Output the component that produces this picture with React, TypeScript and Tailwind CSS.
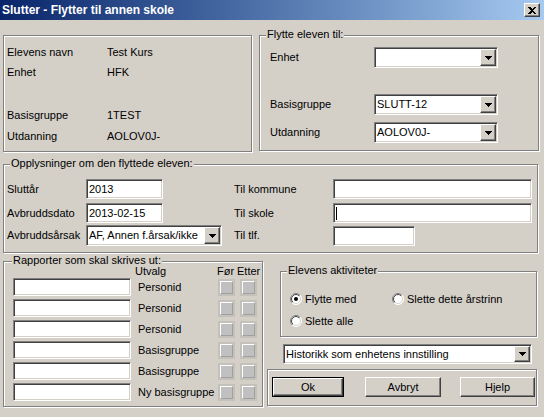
import React from "react";

const sunken =
  "bg-white border border-t-[#808080] border-l-[#808080] border-r-white border-b-white shadow-[inset_1px_1px_0_#404040,inset_-1px_-1px_0_#d4d0c8]";
const raised =
  "bg-[#d4d0c8] border border-t-white border-l-white border-r-[#404040] border-b-[#404040] shadow-[inset_-1px_-1px_0_#808080]";
const etched = "border border-[#808080] shadow-[inset_1px_1px_0_#fff,1px_1px_0_#fff]";

const Arrow = () => (
  <svg width="7" height="4" viewBox="0 0 7 4" shapeRendering="crispEdges">
    <rect x="0" y="0" width="7" height="1" fill="#000" />
    <rect x="1" y="1" width="5" height="1" fill="#000" />
    <rect x="2" y="2" width="3" height="1" fill="#000" />
    <rect x="3" y="3" width="1" height="1" fill="#000" />
  </svg>
);

const Combo = ({ value, className }: { value?: string; className: string }) => (
  <div className={`${sunken} ${className} flex p-px`}>
    <div className="flex-1 pl-px flex items-center overflow-hidden whitespace-nowrap">{value}</div>
    <div className={`${raised} w-[16px] flex items-center justify-center`}>
      <Arrow />
    </div>
  </div>
);

const Input = ({ value, className, caret }: { value?: string; className: string; caret?: boolean }) => (
  <div className={`${sunken} ${className} flex items-center px-[2px] whitespace-nowrap`}>
    {value}
    {caret && <span className="w-px h-[13px] bg-black" />}
  </div>
);

const Group = ({
  label,
  labelLeft = "left-[6px]",
  className,
  children,
}: {
  label?: string;
  labelLeft?: string;
  className: string;
  children: React.ReactNode;
}) => (
  <div className={`relative ${etched} ${className}`}>
    {label && (
      <span className={`absolute -top-[7px] ${labelLeft} bg-[#d4d0c8] px-px leading-[11px]`}>{label}</span>
    )}
    {children}
  </div>
);

const Radio = ({ checked }: { checked?: boolean }) => (
  <svg width="12" height="12" viewBox="0 0 12 12">
    <defs>
      <linearGradient id="ro" x1="0" y1="0" x2="1" y2="1">
        <stop offset="0.5" stopColor="#808080" />
        <stop offset="0.5" stopColor="#ffffff" />
      </linearGradient>
      <linearGradient id="ri" x1="0" y1="0" x2="1" y2="1">
        <stop offset="0.5" stopColor="#404040" />
        <stop offset="0.5" stopColor="#d4d0c8" />
      </linearGradient>
    </defs>
    <circle cx="6" cy="6" r="5.5" fill="#fff" stroke="url(#ro)" />
    <circle cx="6" cy="6" r="4.5" fill="#fff" stroke="url(#ri)" />
    {checked && <circle cx="6" cy="6" r="2" fill="#000" />}
  </svg>
);

const Check = () => (
  <div className="w-[17px] h-[17px] bg-[#c4c1ba] pt-[2px] pl-[2px]">
    <div className="w-[13px] h-[13px] bg-[#c0c0c0] border-t border-l border-t-white border-l-white border-r border-b border-r-[#a0a0a0] border-b-[#a0a0a0]" />
  </div>
);

const reports = ["Personid", "Personid", "Personid", "Basisgruppe", "Basisgruppe", "Ny basisgruppe"];

export default function App() {
  return (
    <div className="w-[544px] h-[417px] overflow-hidden bg-[#d4d0c8] text-black text-[11px] font-['Liberation_Sans',Arial,sans-serif] flex flex-col">
      {/* Title bar */}
      <div className="h-[20px] flex items-center pl-[2px] pr-[4px] bg-gradient-to-r from-[#0a246a] to-[#a6caf0]">
        <span className="text-white font-bold text-[12px] flex-1">Slutter - Flytter til annen skole</span>
        <div className={`${raised} w-[16px] h-[14px] flex items-center justify-center`}>
          <svg width="8" height="7" viewBox="0 0 8 7" shapeRendering="crispEdges">
            <path d="M0 0h2l2 2 2-2h2L5 3.5 8 7H6L4 5 2 7H0l3-3.5z" fill="#000" />
          </svg>
        </div>
      </div>

      <div className="pl-[3px] pt-[15px] flex flex-col">
        {/* Top row */}
        <div className="flex gap-[7px]">
          <Group className="w-[249px] h-[117px] pt-[6px] pl-[3px]">
            <div className="flex h-[20px] items-center">
              <span className="w-[100px]">Elevens navn</span>
              <span>Test Kurs</span>
            </div>
            <div className="flex h-[20px] items-center">
              <span className="w-[100px]">Enhet</span>
              <span>HFK</span>
            </div>
            <div className="flex h-[21px] items-center mt-[23px]">
              <span className="w-[100px]">Basisgruppe</span>
              <span>1TEST</span>
            </div>
            <div className="flex h-[21px] items-center">
              <span className="w-[100px]">Utdanning</span>
              <span>AOLOV0J-</span>
            </div>
          </Group>

          <Group label="Flytte eleven til:" className="w-[280px] h-[116px] pt-[11px] pl-[10px]">
            <div className="flex items-center">
              <span className="w-[104px]">Enhet</span>
              <Combo className="w-[124px] h-[21px]" />
            </div>
            <div className="flex items-center mt-[26px]">
              <span className="w-[104px]">Basisgruppe</span>
              <Combo value="SLUTT-12" className="w-[124px] h-[21px]" />
            </div>
            <div className="flex items-center mt-[7px]">
              <span className="w-[104px]">Utdanning</span>
              <Combo value="AOLOV0J-" className="w-[124px] h-[21px]" />
            </div>
          </Group>
        </div>

        {/* Middle group */}
        <Group label="Opplysninger om den flyttede eleven:" className="mt-[12px] w-[535px] h-[89px] pt-[14px] pl-[3px]">
          <div className="flex items-center h-[20px]">
            <div className="w-[227px] flex items-center">
              <span className="w-[79px]">Sluttår</span>
              <Input value="2013" className="w-[77px] h-[20px]" />
            </div>
            <span className="w-[99px]">Til kommune</span>
            <Input className="w-[199px] h-[20px]" />
          </div>
          <div className="flex items-center h-[20px] mt-[4px]">
            <div className="w-[227px] flex items-center">
              <span className="w-[79px]">Avbruddsdato</span>
              <Input value="2013-02-15" className="w-[77px] h-[20px]" />
            </div>
            <span className="w-[99px]">Til skole</span>
            <Input caret className="w-[199px] h-[20px]" />
          </div>
          <div className="flex items-center h-[21px] mt-[2px]">
            <div className="w-[227px] flex items-center">
              <span className="w-[79px]">Avbruddsårsak</span>
              <Combo value="AF, Annen f.årsak/ikke" className="w-[136px] h-[21px]" />
            </div>
            <span className="w-[99px]">Til tlf.</span>
            <Input className="w-[82px] h-[20px]" />
          </div>
        </Group>

        {/* Bottom */}
        <div className="flex mt-[8px]">
          <Group label="Rapporter som skal skrives ut:" labelLeft="left-[8px]" className="w-[260px] h-[146px] pl-[9px]">
            <div className="flex h-[12px] items-end leading-[11px] mt-[3px]">
              <span className="ml-[122px] w-[82px]">Utvalg</span>
              <span className="w-[20px]">Før</span>
              <span>Etter</span>
            </div>
            <div className="flex flex-col gap-[3px] mt-[1px]">
              {reports.map((r, i) => (
                <div key={i} className="flex items-center h-[18px]">
                  <Input className="w-[118px] h-[18px]" />
                  <span className="ml-[7px] w-[80px] whitespace-nowrap">{r}</span>
                  <Check />
                  <div className="w-[5px]" />
                  <Check />
                </div>
              ))}
            </div>
          </Group>

          <div className="ml-[4px] w-[271px] flex flex-col">
            <Group label="Elevens aktiviteter" className="ml-[13px] mt-[10px] w-[257px] h-[66px] pt-[20px] pl-[9px]">
              <div className="flex items-center h-[14px]">
                <div className="w-[102px] flex items-center gap-[3px]">
                  <Radio checked />
                  <span>Flytte med</span>
                </div>
                <div className="flex items-center gap-[3px]">
                  <Radio />
                  <span>Slette dette årstrinn</span>
                </div>
              </div>
              <div className="flex items-center h-[14px] mt-[8px] gap-[3px]">
                <Radio />
                <span>Slette alle</span>
              </div>
            </Group>

            <Combo value="Historikk som enhetens innstilling" className="ml-[16px] mt-[7px] w-[249px] h-[20px]" />

            <Group className="mt-[5px] w-[270px] h-[37px] pt-[7px] pl-[4px] flex items-start">
              <div className="border border-black">
                <div className={`${raised} w-[70px] h-[18px] flex items-center justify-center`}>Ok</div>
              </div>
              <div className={`${raised} ml-[21px] w-[76px] h-[20px] flex items-center justify-center`}>Avbryt</div>
              <div className={`${raised} ml-[19px] w-[75px] h-[20px] flex items-center justify-center`}>Hjelp</div>
            </Group>
          </div>
        </div>
      </div>
    </div>
  );
}
